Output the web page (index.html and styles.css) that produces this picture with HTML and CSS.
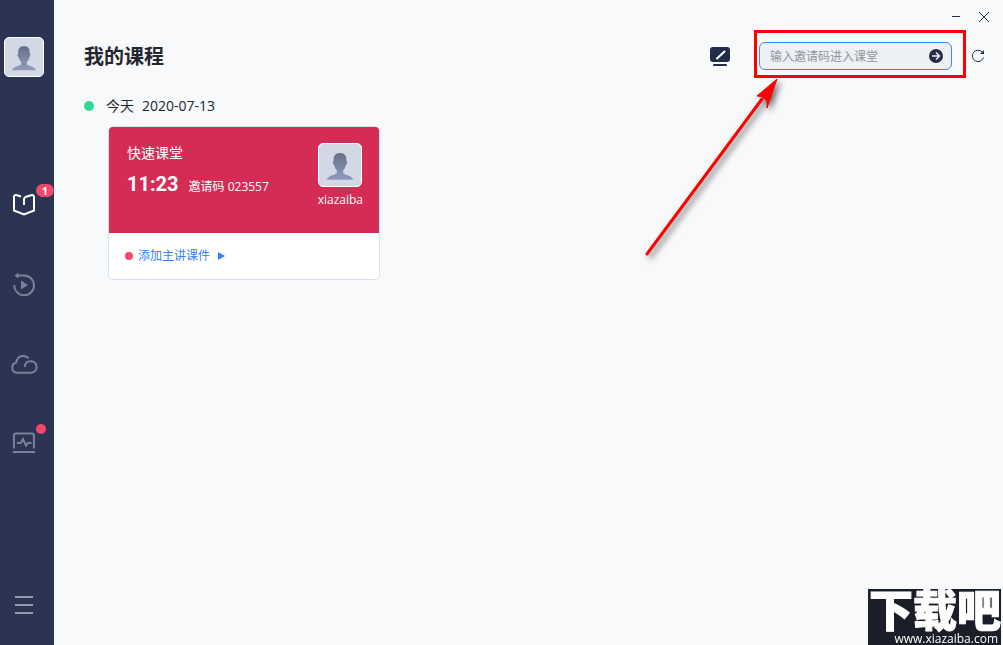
FILE: index.html
```
<!DOCTYPE html>
<html lang="zh-CN">
<head>
    <meta charset="UTF-8">
    <meta name="viewport" content="width=device-width, initial-scale=1.0">
    <title>我的课程</title>
    <link rel="stylesheet" href="styles.css">
</head>
<body>
    <svg class="symbols" aria-hidden="true">
        <defs>
            <linearGradient id="person-fill" x1="0" y1="0" x2="0" y2="1">
                <stop offset="0" stop-color="#687087"/>
                <stop offset="1" stop-color="#8f9abb"/>
            </linearGradient>
        </defs>
        <symbol id="person" viewBox="0 0 40 40">
            <path fill="url(#person-fill)" d="M20 8.500c4.500 0 6.500 3 6 7.500 1 0 1 3-.5 4.500-.5 2.500-1.500 3.500-2.500 4.500v2.500c1.500 2.500 9 2 9.500 6.500H7.500c.5-4.500 8-4 9.500-6.500V25c-1-1-2-2-2.500-4.500C13 19 13 16 14 16c-.5-4.500 1.500-7.500 6-7.500z"/>
        </symbol>
    </svg>
    <div class="app">
        <aside class="sidebar">
            <button class="avatar" aria-label="个人资料"><svg><use href="#person"/></svg></button>
            <nav class="nav">
                <a class="nav-item active" href="#courses" aria-label="课程">
                    <svg width="24" height="24" viewBox="0 0 24 24"><path d="M9 4.500 5 3.300c-2-.5-3 0-3 1.500v13.700L12 22.500 22 18.500V4.800c0-1.500-1-2-3-1.500L13.500 5Q12 5.500 12 7.500V13"/></svg>
                    <span class="badge">1</span>
                </a>
                <a class="nav-item" href="#replay" aria-label="回放">
                    <svg width="24" height="24" viewBox="0 0 24 24"><path d="M5 3.500h7A9.900 9.900 0 1 1 2.200 13"/><path class="solid" d="M2.500 3.500 6.500.5v6zM9 8.500l7 4.500-7 4.500z"/></svg>
                </a>
                <a class="nav-item" href="#cloud" aria-label="云盘">
                    <svg width="28" height="24" viewBox="0 0 28 24"><path d="M18.500 6.500C16 3 9 3 7 8c-.5 1-.7 2-.7 2.500C1 12 .5 20 7 20.700h14C29 20 28 9.500 21 9.200c-4-.1-6.500 2.500-6 5.800"/></svg>
                </a>
                <a class="nav-item" href="#report" aria-label="报告">
                    <svg width="24" height="24" viewBox="0 0 24 24"><path d="M1.900 16.500V3.500q0-2 2-2h16q2 0 2 2v13M1 20h22M5 11h3.500L11 7l3 6.500 2-2.500h3.500"/></svg>
                    <span class="dot"></span>
                </a>
            </nav>
            <button class="nav-item menu" aria-label="菜单">
                <svg width="24" height="24" viewBox="0 0 24 24"><path d="M3 4h18M3 12h18M3 20h18"/></svg>
            </button>
        </aside>
        <main class="main">
            <div class="titlebar">
                <button aria-label="最小化"><svg width="12" height="12"><path d="M2 5.500h8"/></svg></button>
                <button aria-label="关闭"><svg width="12" height="12"><path d="M1 1l10 10M11 1 1 11"/></svg></button>
            </div>
            <header class="header">
                <h1>我的课程</h1>
                <button class="board" aria-label="白板">
                    <svg width="20" height="22" viewBox="0 0 20 22"><rect y="2" width="20" height="15" rx="3"/><rect x="3" y="19" width="14" height="2" rx="1"/><path d="M7 13.500 14.500 6.500"/></svg>
                </button>
                <form class="join">
                    <input class="code" type="text" placeholder="输入邀请码进入课堂" aria-label="邀请码">
                    <button type="button" class="go" aria-label="进入课堂">
                        <svg width="14" height="14" viewBox="0 0 14 14"><circle cx="7" cy="7" r="7"/><path d="M3 7h7M7 3.500 10.500 7 7 10.500"/></svg>
                    </button>
                    <span class="highlight"></span>
                    <svg class="arrow" width="160" height="200" viewBox="0 0 160 200"><path d="M17 183 132 28" stroke="#f00" stroke-width="3" stroke-linecap="round"/><path d="M147 8 127 25l6 1 4 4v7z" fill="#f00" stroke="#f00"/></svg>
                </form>
                <button class="refresh" aria-label="刷新">
                    <svg width="14" height="14" viewBox="0 0 14 14"><path d="M12.500 8.500A5.700 5.700 0 1 1 11.200 3"/><path class="tip" d="M13 1v4H9z"/></svg>
                </button>
            </header>
            <section class="day">
                <h2><span class="mark"></span>今天<time datetime="2020-07-13">2020-07-13</time></h2>
                <article class="card">
                    <div class="card-top">
                        <div>
                            <h3>快速课堂</h3>
                            <p><span class="clock">11:23</span>邀请码 023557</p>
                        </div>
                        <div class="teacher">
                            <span class="avatar"><svg><use href="#person"/></svg></span>
                            xiazaiba
                        </div>
                    </div>
                    <a class="card-bottom" href="#courseware">
                        <span class="todo"></span>添加主讲课件
                        <svg width="7" height="8"><path d="M0 0l7 4-7 4z"/></svg>
                    </a>
                </article>
            </section>
        </main>
        <div class="watermark">
            <strong>下载吧</strong>
            <span>www.xiazaiba.com</span>
        </div>
    </div>
</body>
</html>
```
FILE: styles.css
```
* {
    box-sizing: border-box;
}
body {
    margin: 0;
    font-family: "Open Sans", "Noto Sans CJK SC", sans-serif;
    font-size: 12px;
    line-height: 20px;
    color: #23262e;
    background: #f7f9fb;
}
h1, h2, h3, p {
    margin: 0;
    font-weight: normal;
}
a {
    text-decoration: none;
}
button {
    padding: 0;
    border: none;
    background: none;
    cursor: pointer;
}
svg {
    display: block;
    fill: none;
}
.symbols {
    position: absolute;
    width: 0;
    height: 0;
}
.app {
    display: flex;
    min-height: 100vh;
}

/* sidebar */
.sidebar {
    display: flex;
    flex-direction: column;
    align-items: flex-start;
    width: 54px;
    padding: 37px 0 16px;
    background: #2b3553;
}
.avatar {
    display: block;
    width: 40px;
    height: 40px;
    border: 1px solid #fff;
    border-radius: 5px;
    background: #d3d9e4;
}
.avatar svg {
    width: 100%;
    height: 100%;
}
.sidebar .avatar {
    margin-left: 4px;
}
.nav {
    display: flex;
    flex-direction: column;
    gap: 32px;
    margin-top: 103px;
}
.nav-item {
    position: relative;
    display: flex;
    align-items: center;
    justify-content: center;
    width: 48px;
    height: 48px;
}
.nav-item svg {
    stroke: #7b8198;
    stroke-width: 2;
}
.nav-item .solid {
    fill: #7b8198;
    stroke: none;
}
.nav-item.active svg {
    stroke: #fff;
}
.nav-item.menu {
    margin-top: auto;
}
.menu svg {
    stroke: #959bab;
}
.badge {
    position: absolute;
    left: 36px;
    top: 4px;
    width: 18px;
    border-radius: 7px;
    background: #f4486a;
    color: #fff;
    font-size: 11px;
    font-weight: bold;
    line-height: 13px;
    text-align: center;
}
.dot {
    position: absolute;
    left: 36px;
    top: 4px;
    width: 10px;
    height: 10px;
    border-radius: 50%;
    background: #f4486a;
}

/* main area */
.main {
    flex: 1;
}
.titlebar {
    display: flex;
    justify-content: flex-end;
    gap: 16px;
    height: 34px;
    padding-right: 13px;
}
.titlebar svg {
    stroke: #273050;
    stroke-width: 1;
}
.header {
    display: flex;
    align-items: center;
    height: 44px;
    padding: 0 15px 0 30px;
}
.header h1 {
    flex: 1;
    padding-top: 2px;
    font-size: 20px;
    font-weight: bold;
    line-height: 28px;
}
.board {
    margin-right: 29px;
}
.board rect {
    fill: #232c49;
}
.board path {
    stroke: #fff;
    stroke-width: 2;
    stroke-linecap: round;
}
.join {
    position: relative;
    display: flex;
    align-items: center;
    width: 193px;
    height: 28px;
    margin-right: 16px;
    padding: 0 8px 0 10px;
    border: 1px solid #3f86f6;
    border-radius: 6px;
    background: #edf0f5;
}
.code {
    flex: 1;
    min-width: 0;
    padding: 2px 0 0;
    border: none;
    outline: none;
    background: none;
    font: inherit;
}
.code::placeholder {
    color: #92959c;
}
.go circle {
    fill: #232c49;
}
.go path {
    stroke: #edf0f5;
    stroke-width: 1.500;
}
.highlight {
    position: absolute;
    inset: -13px -15px -9px -6px;
    border: 3px solid #f00;
    pointer-events: none;
}
.arrow {
    position: absolute;
    left: -130px;
    top: 28px;
    filter: drop-shadow(3px 3px 3px rgba(0, 0, 0, 0.6));
    pointer-events: none;
}
.refresh {
    display: flex;
    justify-content: center;
    width: 20px;
}
.refresh svg {
    stroke: #273050;
    stroke-width: 1;
}
.refresh .tip {
    fill: #273050;
    stroke: none;
}

/* course list */
.day {
    padding: 18px 30px;
}
.day h2 {
    display: flex;
    align-items: center;
    font-size: 14px;
    margin-bottom: 10px;
}
.mark {
    width: 10px;
    height: 10px;
    margin-right: 12px;
    border-radius: 50%;
    background: #32d896;
}
.day time {
    margin-left: 8px;
}
.card {
    width: 272px;
    margin-left: 24px;
    border: 1px solid #d9e1ec;
    border-radius: 5px;
    background: #fff;
    overflow: hidden;
}
.card-top {
    display: flex;
    justify-content: space-between;
    height: 106px;
    padding: 16px 16px 0 18px;
    background: #d52c55;
    color: #fff;
}
.card h3 {
    font-size: 14px;
}
.card p {
    display: flex;
    align-items: baseline;
    margin-top: 11px;
}
.clock {
    margin-right: 10px;
    font-family: Roboto, sans-serif;
    font-size: 20px;
    font-weight: bold;
}
.teacher {
    display: flex;
    flex-direction: column;
    align-items: center;
    gap: 3px;
}
.teacher .avatar {
    width: 44px;
    height: 44px;
}
.card-bottom {
    display: flex;
    align-items: center;
    height: 46px;
    padding-left: 16px;
    color: #3382f7;
}
.todo {
    width: 8px;
    height: 8px;
    margin-right: 5px;
    border-radius: 50%;
    background: #f4486a;
}
.card-bottom svg {
    margin-left: 8px;
    fill: #3382f7;
}

.watermark {
    position: fixed;
    right: 2px;
    bottom: 0;
    width: 133px;
    height: 56px;
    background: #1b1e28;
    color: #fff;
    text-align: right;
    white-space: nowrap;
}
.watermark strong {
    display: block;
    font-size: 44px;
    font-weight: 900;
    line-height: 42px;
    -webkit-text-stroke: 1px #fff;
}
.watermark span {
    display: block;
    padding-right: 3px;
    line-height: 16px;
}
```
